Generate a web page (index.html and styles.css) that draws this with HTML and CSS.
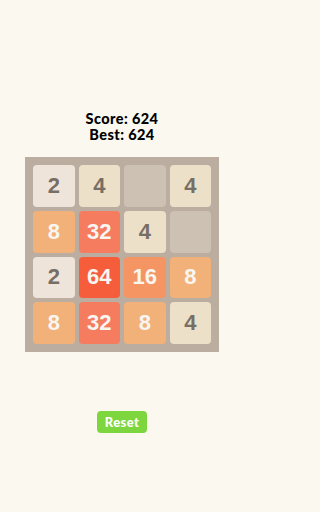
FILE: index.html
```html
<!DOCTYPE html>
<html>
<head>
<meta charset="utf-8">
<meta name="viewport" content="width=244">
<link rel="stylesheet" href="styles.css">
</head>
<body>
<div class="app">
  <div class="scores">
    <div class="line">Score: 624</div>
    <div class="line">Best: 624</div>
  </div>
  <div class="board">
    <div class="tile t2">2</div>
    <div class="tile t4">4</div>
    <div class="tile empty"></div>
    <div class="tile t4">4</div>
    <div class="tile t8">8</div>
    <div class="tile t32">32</div>
    <div class="tile t4">4</div>
    <div class="tile empty"></div>
    <div class="tile t2">2</div>
    <div class="tile t64">64</div>
    <div class="tile t16">16</div>
    <div class="tile t8">8</div>
    <div class="tile t8">8</div>
    <div class="tile t32">32</div>
    <div class="tile t8">8</div>
    <div class="tile t4">4</div>
  </div>
  <button class="reset">Reset</button>
</div>
</body>
</html>
```
FILE: styles.css
```css
html, body {
  margin: 0;
  padding: 0;
  background: #faf8ef;
  height: 100%;
}
.app {
  width: 244px;
  display: flex;
  flex-direction: column;
  align-items: center;
  padding-top: 111px;
  font-family: "Liberation Sans", Arial, sans-serif;
}
.scores {
  display: flex;
  flex-direction: column;
  align-items: center;
  font-family: "Lato", "Liberation Sans", sans-serif;
  font-weight: 900;
  font-size: 14.5px;
  letter-spacing: 0.4px;
  line-height: 16px;
  color: #000;
}
.line {
  height: 16px;
}
.board {
  margin-top: 14px;
  width: 194px;
  height: 195px;
  box-sizing: border-box;
  padding: 8px;
  background: #bbada0;
  display: grid;
  grid-template-columns: repeat(4, 1fr);
  grid-template-rows: repeat(4, 1fr);
  gap: 4px;
}
.tile {
  border-radius: 4px;
  display: flex;
  align-items: center;
  justify-content: center;
  font-weight: bold;
  font-size: 22px;
  color: #776e65;
}
.empty { background: #cdc1b4; }
.t2 { background: #eee4da; }
.t4 { background: #ede0c8; }
.t8 { background: #f2b179; color: #f9f6f2; }
.t16 { background: #f59563; color: #f9f6f2; }
.t32 { background: #f67c5f; color: #f9f6f2; }
.t64 { background: #f65e3b; color: #f9f6f2; }
.reset {
  margin-top: 59px;
  width: 50px;
  height: 22px;
  border: none;
  border-radius: 4px;
  background: #7ed63f;
  color: #fff;
  font-family: "Lato", "Liberation Sans", sans-serif;
  font-weight: 900;
  font-size: 13px;
  letter-spacing: 0.4px;
  padding: 0;
}
```
